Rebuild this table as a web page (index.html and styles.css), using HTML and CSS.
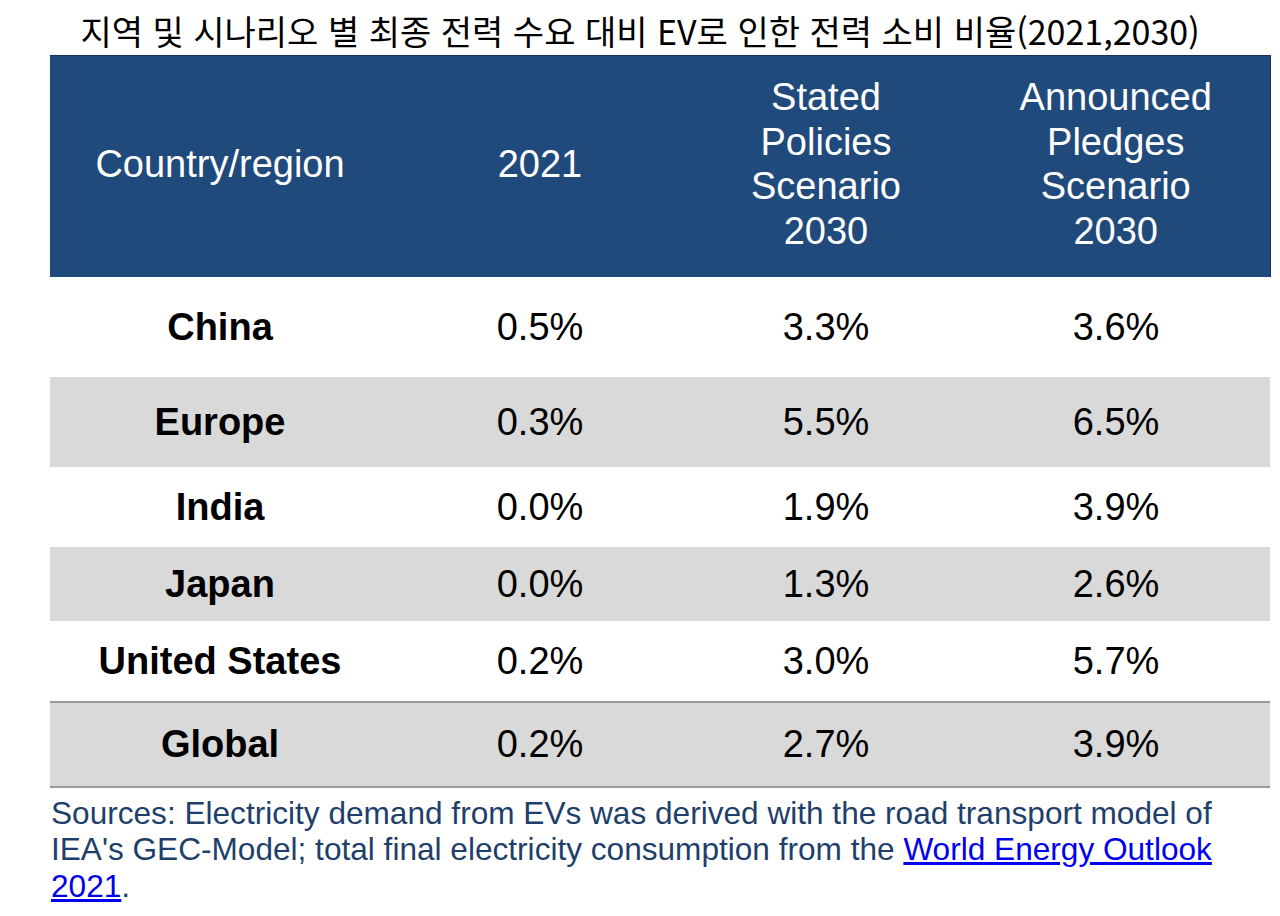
FILE: index.html
```html
<!DOCTYPE html>
<html lang="ko">
<head>
<meta charset="utf-8">
<title>EV electricity share</title>
<link rel="stylesheet" href="styles.css">
</head>
<body>
<div class="page">
  <h1 class="title">지역 및 시나리오 별 최종 전력 수요 대비 EV로 인한 전력 소비 비율(2021,2030)</h1>
  <table class="data">
    <colgroup>
      <col class="c1"><col class="c2"><col class="c3"><col class="c4">
    </colgroup>
    <thead>
      <tr>
        <th>Country/region</th>
        <th>2021</th>
        <th>Stated<br>Policies<br>Scenario<br>2030</th>
        <th>Announced<br>Pledges<br>Scenario<br>2030</th>
      </tr>
    </thead>
    <tbody>
      <tr class="r-china"><td class="name">China</td><td>0.5%</td><td>3.3%</td><td>3.6%</td></tr>
      <tr class="r-europe alt"><td class="name">Europe</td><td>0.3%</td><td>5.5%</td><td>6.5%</td></tr>
      <tr class="r-india"><td class="name">India</td><td>0.0%</td><td>1.9%</td><td>3.9%</td></tr>
      <tr class="r-japan alt"><td class="name">Japan</td><td>0.0%</td><td>1.3%</td><td>2.6%</td></tr>
      <tr class="r-us"><td class="name">United States</td><td>0.2%</td><td>3.0%</td><td>5.7%</td></tr>
      <tr class="r-global alt"><td class="name">Global</td><td>0.2%</td><td>2.7%</td><td>3.9%</td></tr>
    </tbody>
  </table>
  <p class="source">Sources: Electricity demand from EVs was derived with the road transport model of IEA's GEC-Model; total final electricity consumption from the <a href="#">World Energy Outlook 2021</a>.</p>
</div>
</body>
</html>
```

FILE: styles.css
```css
html, body {
  margin: 0;
  padding: 0;
  background: #ffffff;
}

.page {
  width: 1280px;
  height: 916px;
  overflow: hidden;
  font-family: "Liberation Sans", Arial, sans-serif;
}

.title {
  margin: 0;
  padding-top: 10px;
  height: 55px;
  box-sizing: border-box;
  text-align: center;
  font-family: "Noto Sans CJK KR", "Noto Sans", sans-serif;
  font-weight: 400;
  font-size: 34px;
  line-height: 42px;
  color: #000000;
  white-space: nowrap;
}

.data {
  margin-left: 50px;
  width: 1220px;
  border-collapse: collapse;
  table-layout: fixed;
  font-size: 38px;
}

.c1 { width: 340px; }
.c2 { width: 300px; }
.c3 { width: 272px; }
.c4 { width: 308px; }

.data thead th {
  background: #214a7c;
  color: #ffffff;
  font-weight: 400;
  line-height: 44.5px;
  height: 221px;
  padding: 0 0 4px;
  text-align: center;
  vertical-align: middle;
  border-top: 1px solid #16335a;
  box-sizing: border-box;
}

.data thead th:last-child {
  border-right: 1px solid #16335a;
}

.data td {
  padding: 0;
  text-align: center;
  vertical-align: middle;
  color: #000000;
  line-height: 44px;
}

.data td.name {
  font-weight: 700;
}

.data tr.alt td {
  background: #d9d9d9;
}

.r-china td { height: 100px; }
.r-europe td { height: 90px; }
.r-india td { height: 80px; }
.r-japan td { height: 74px; }
.r-us td { height: 80px; }
.r-global td {
  height: 83px;
  border-top: 2px solid #9a9a9a;
  border-bottom: 2px solid #9a9a9a;
}

.source {
  margin: 7px 0 0 51px;
  width: 1180px;
  font-size: 31.6px;
  line-height: 36.5px;
  color: #1f3f6b;
}

.source a {
  color: #0000ee;
  text-decoration: underline;
}
```
